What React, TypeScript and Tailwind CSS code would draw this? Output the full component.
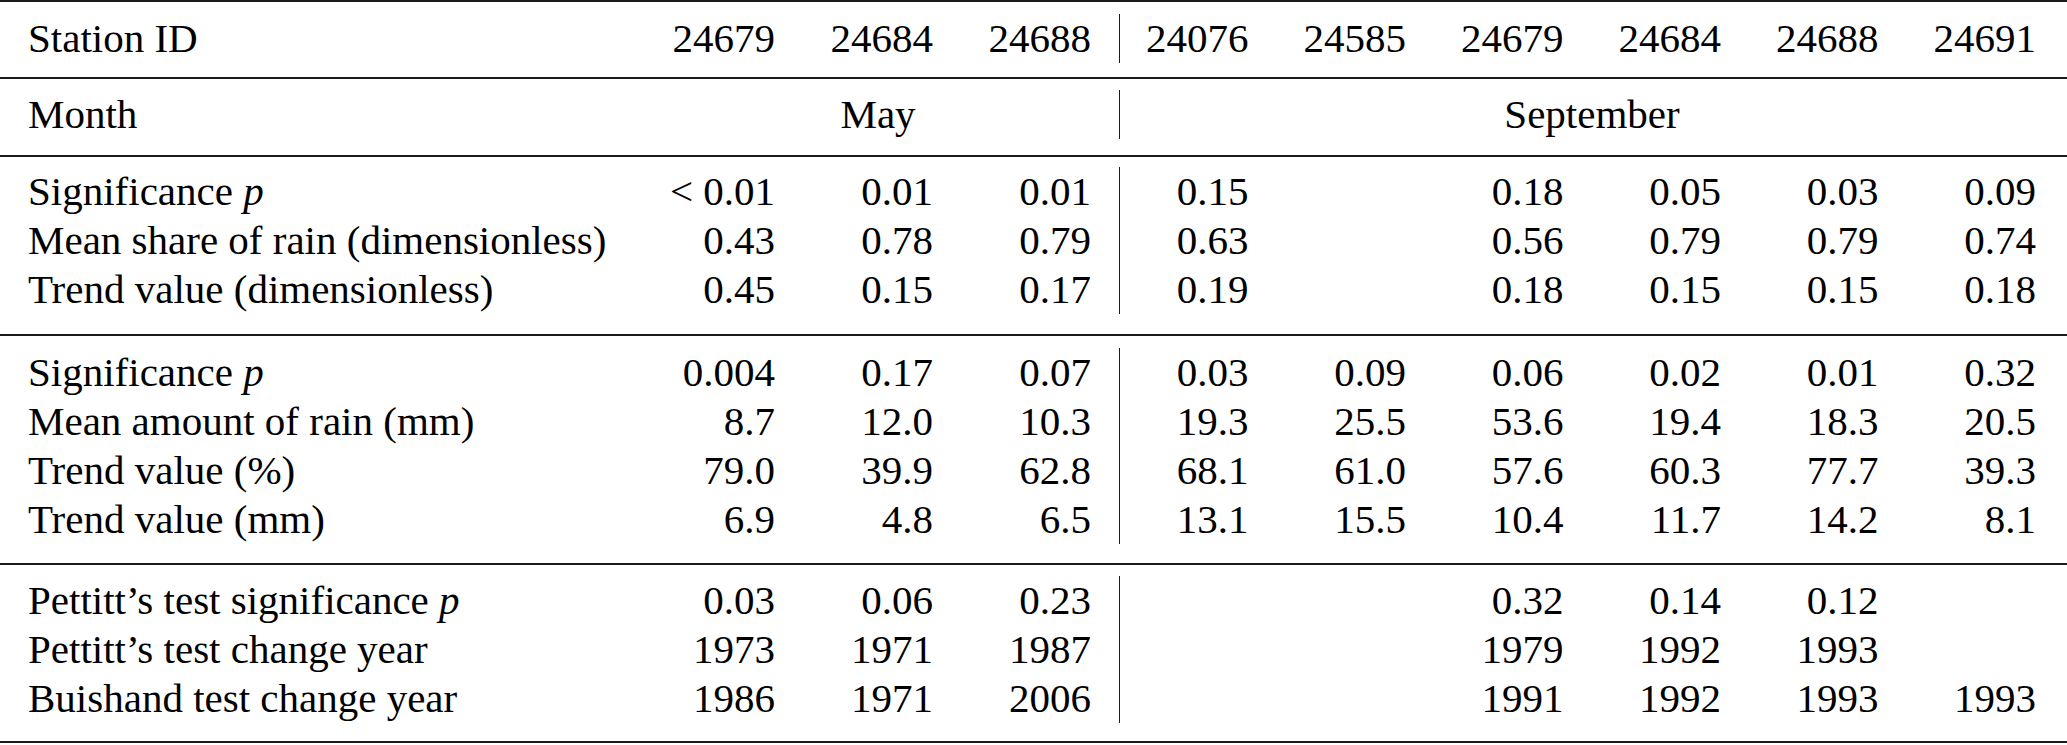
import React from 'react';

type Row = { label: React.ReactNode; may: string[]; sep: string[] };

const P = () => <span className="italic">p</span>;

const sections: { pad: string; rows: Row[] }[] = [
  {
    pad: 'pt-[10px] pb-[20px]',
    rows: [
      { label: <>Significance <P /></>, may: ['< 0.01', '0.01', '0.01'], sep: ['0.15', '', '0.18', '0.05', '0.03', '0.09'] },
      { label: 'Mean share of rain (dimensionless)', may: ['0.43', '0.78', '0.79'], sep: ['0.63', '', '0.56', '0.79', '0.79', '0.74'] },
      { label: 'Trend value (dimensionless)', may: ['0.45', '0.15', '0.17'], sep: ['0.19', '', '0.18', '0.15', '0.15', '0.18'] },
    ],
  },
  {
    pad: 'pt-[12px] pb-[19px]',
    rows: [
      { label: <>Significance <P /></>, may: ['0.004', '0.17', '0.07'], sep: ['0.03', '0.09', '0.06', '0.02', '0.01', '0.32'] },
      { label: 'Mean amount of rain (mm)', may: ['8.7', '12.0', '10.3'], sep: ['19.3', '25.5', '53.6', '19.4', '18.3', '20.5'] },
      { label: 'Trend value (%)', may: ['79.0', '39.9', '62.8'], sep: ['68.1', '61.0', '57.6', '60.3', '77.7', '39.3'] },
      { label: 'Trend value (mm)', may: ['6.9', '4.8', '6.5'], sep: ['13.1', '15.5', '10.4', '11.7', '14.2', '8.1'] },
    ],
  },
  {
    pad: 'pt-[11px] pb-[18px]',
    rows: [
      { label: <>Pettitt’s test significance <P /></>, may: ['0.03', '0.06', '0.23'], sep: ['', '', '0.32', '0.14', '0.12', ''] },
      { label: 'Pettitt’s test change year', may: ['1973', '1971', '1987'], sep: ['', '', '1979', '1992', '1993', ''] },
      { label: 'Buishand test change year', may: ['1986', '1971', '2006'], sep: ['', '', '1991', '1992', '1993', '1993'] },
    ],
  },
];

const grid =
  'grid grid-cols-[645px_158px_158px_158px_157.5px_157.5px_157.5px_157.5px_157.5px_157.5px]';

function Rule() {
  return <div className="h-[2px] w-full bg-[#1a1a1a]" />;
}

function DataRow({ row }: { row: Row }) {
  return (
    <>
      <div className="pl-[28px] whitespace-nowrap">{row.label}</div>
      {row.may.map((v, i) => (
        <div key={`m${i}`} className="pr-[28px] text-right whitespace-nowrap">
          {v}
        </div>
      ))}
      {row.sep.map((v, i) => (
        <div
          key={`s${i}`}
          className={`pr-[28px] text-right whitespace-nowrap ${i === 0 ? 'border-l border-[#1a1a1a]' : ''}`}
        >
          {v}
        </div>
      ))}
    </>
  );
}

export default function App() {
  const ids = ['24679', '24684', '24688'];
  const sepIds = ['24076', '24585', '24679', '24684', '24688', '24691'];

  return (
    <div className="w-[2067px] min-h-[745px] bg-white text-black font-['Liberation_Serif','Times_New_Roman',serif] text-[41px] leading-[49px]">
      <Rule />
      <div className={`${grid} pt-[12px] pb-[14px]`}>
        <DataRow row={{ label: 'Station ID', may: ids, sep: sepIds }} />
      </div>
      <Rule />
      <div className={`${grid} pt-[11px] pb-[16px]`}>
        <div className="pl-[28px]">Month</div>
        <div className="col-span-3 text-center pl-[20px] pr-[28px]">May</div>
        <div className="col-span-6 text-center border-l border-[#1a1a1a]">September</div>
      </div>
      {sections.map((s, i) => (
        <React.Fragment key={i}>
          <Rule />
          <div className={`${grid} ${s.pad}`}>
            {s.rows.map((r, j) => (
              <DataRow key={j} row={r} />
            ))}
          </div>
        </React.Fragment>
      ))}
      <Rule />
    </div>
  );
}
